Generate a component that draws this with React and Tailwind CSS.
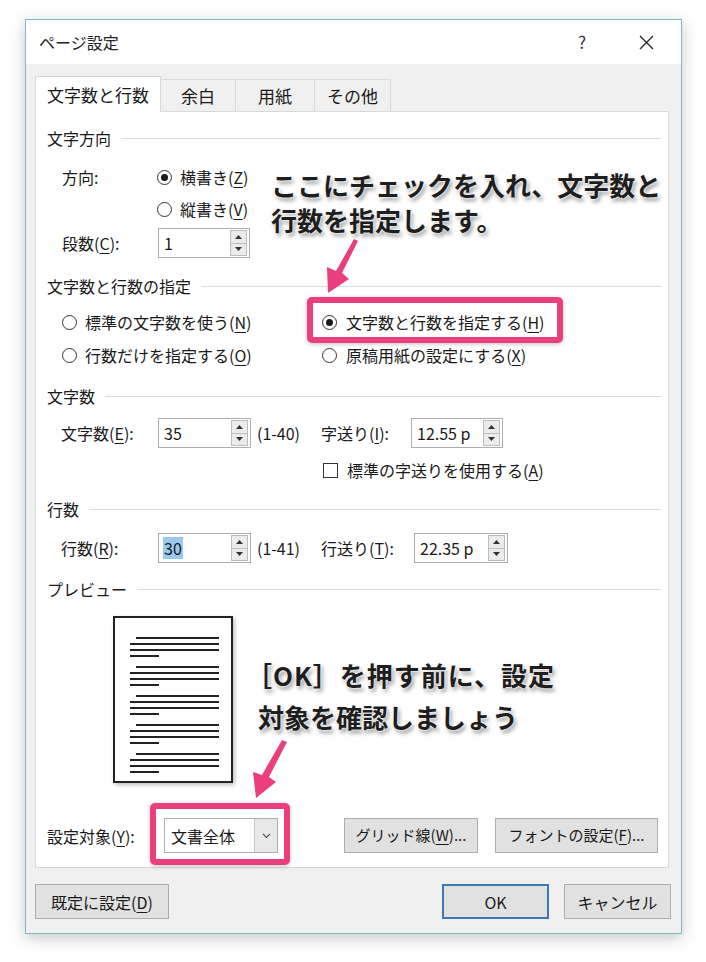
import React from 'react';

const font = "[font-family:'Noto_Sans_CJK_JP','Noto_Sans',sans-serif]";

const Key = ({ k }) => (
  <>
    (<span className="underline underline-offset-[3px] decoration-1">{k}</span>)
  </>
);

const Radio = ({ checked }) => (
  <span className="w-[15px] h-[15px] rounded-full border border-[#333] bg-white flex items-center justify-center shrink-0">
    {checked && <span className="w-[7px] h-[7px] rounded-full bg-[#1a1a1a]" />}
  </span>
);

const Section = ({ title }) => (
  <div className="flex items-center gap-[10px] h-[24px]">
    <span>{title}</span>
    <div className="flex-1 h-px bg-[#dcdcdc]" />
  </div>
);

const SpinArrows = () => (
  <div className="flex flex-col w-[17px] h-[26px] border border-[#bdbdbd] bg-[#ebebeb] shrink-0">
    <div className="flex-1 flex items-center justify-center border-b border-[#bdbdbd]">
      <svg width="7" height="4" viewBox="0 0 7 4"><path d="M0 4 L3.5 0 L7 4 Z" fill="#333" /></svg>
    </div>
    <div className="flex-1 flex items-center justify-center">
      <svg width="7" height="4" viewBox="0 0 7 4"><path d="M0 0 L3.5 4 L7 0 Z" fill="#333" /></svg>
    </div>
  </div>
);

const Spin = ({ value, className, selected }) => (
  <div className={`h-[30px] border border-[#abadb3] bg-white flex items-center justify-between pl-[4px] pr-[2px] ${className}`}>
    <span className={selected ? 'bg-[#99c9ef] px-[1px] leading-[22px]' : 'px-[1px]'}>{value}</span>
    <SpinArrows />
  </div>
);

const Button = ({ children, className }) => (
  <div className={`h-[35px] bg-[#e1e1e1] border border-[#adadad] flex items-center justify-center ${className}`}>
    {children}
  </div>
);

const PreviewPage = () => {
  const groups = [20, 49, 78, 107, 136];
  return (
    <div className="w-[120px] h-[167px] border-2 border-[#222] bg-white shadow-[2px_2px_4px_rgba(0,0,0,0.25)]">
      <svg width="116" height="163" viewBox="0 0 116 163">
        {groups.map((y) => (
          <g key={y} stroke="#222" strokeWidth="2">
            <line x1="21" y1={y} x2="104" y2={y} />
            <line x1="15" y1={y + 6} x2="104" y2={y + 6} />
            <line x1="15" y1={y + 12} x2="104" y2={y + 12} />
            <line x1="15" y1={y + 18} x2="44" y2={y + 18} />
          </g>
        ))}
      </svg>
    </div>
  );
};

const Callout = ({ children, className }) => (
  <div
    className={`absolute font-bold text-[26px] text-[#1e1e1e] whitespace-nowrap [text-shadow:0_0_2px_#fff,0_0_3px_#fff,2px_3px_4px_rgba(0,0,0,0.45)] ${className}`}
  >
    {children}
  </div>
);

const App = () => {
  return (
    <div className={`relative w-[706px] h-[962px] bg-white pt-[19px] pl-[25px] text-[16px] text-[#1a1a1a] ${font}`}>
      {/* dialog */}
      <div className="w-[657px] h-[915px] border border-[#7db8c5] bg-[#f0f0f0] shadow-[0_4px_14px_rgba(0,0,0,0.22)] flex flex-col">
        {/* title bar */}
        <div className="h-[44px] bg-white flex items-center pl-[13px] shrink-0">
          <span className="text-[16px] text-[#222]">ページ設定</span>
          <span className="ml-auto text-[17px] text-[#333] w-[14px] text-center">?</span>
          <svg className="ml-[50px] mr-[27px]" width="15" height="15" viewBox="0 0 15 15">
            <path d="M1 1 L14 14 M14 1 L1 14" stroke="#222" strokeWidth="1.3" />
          </svg>
        </div>

        <div className="flex-1 pt-[11px] pl-[9px] pr-[12px] flex flex-col">
          {/* tabs */}
          <div className="flex items-end h-[36px] text-[17px]">
            <div className="relative z-10 w-[126px] h-[36px] -mb-px bg-white border border-[#d9d9d9] border-b-0 flex items-center justify-center">
              文字数と行数
            </div>
            <div className="w-[75px] h-[32px] border-t border-r border-[#d9d9d9] flex items-center justify-center">余白</div>
            <div className="w-[79px] h-[32px] border-t border-r border-[#d9d9d9] flex items-center justify-center">用紙</div>
            <div className="w-[76px] h-[32px] border-t border-r border-[#d9d9d9] flex items-center justify-center">その他</div>
          </div>

          {/* panel */}
          <div className="w-[634px] h-[757px] bg-white border border-[#d9d9d9] pt-[14px] pl-[11px] pr-[7px] flex flex-col">
            <Section title="文字方向" />
            <div className="mt-[12px] h-[30px] flex items-center pl-[15px]">
              <span className="w-[95px]">方向:</span>
              <Radio checked />
              <span className="ml-[8px]">横書き<Key k="Z" /></span>
            </div>
            <div className="mt-[2px] h-[30px] flex items-center pl-[110px]">
              <Radio />
              <span className="ml-[8px]">縦書き<Key k="V" /></span>
            </div>
            <div className="mt-[4px] h-[30px] flex items-center pl-[15px]">
              <span className="w-[96px]">段数<Key k="C" />:</span>
              <Spin value="1" className="w-[92px]" />
            </div>

            <div className="mt-[16px]">
              <Section title="文字数と行数の指定" />
            </div>
            <div className="mt-[9px] h-[30px] flex items-center pl-[15px]">
              <div className="w-[260px] flex items-center">
                <Radio />
                <span className="ml-[8px]">標準の文字数を使う<Key k="N" /></span>
              </div>
              <Radio checked />
              <span className="ml-[9px]">文字数と行数を指定する<Key k="H" /></span>
            </div>
            <div className="mt-[3px] h-[30px] flex items-center pl-[15px]">
              <div className="w-[260px] flex items-center">
                <Radio />
                <span className="ml-[8px]">行数だけを指定する<Key k="O" /></span>
              </div>
              <Radio />
              <span className="ml-[9px]">原稿用紙の設定にする<Key k="X" /></span>
            </div>

            <div className="mt-[14px]">
              <Section title="文字数" />
            </div>
            <div className="mt-[10px] h-[30px] flex items-center pl-[14px]">
              <span className="w-[97px]">文字数<Key k="E" />:</span>
              <Spin value="35" className="w-[93px]" />
              <span className="ml-[6px] w-[64px]">(1-40)</span>
              <span className="w-[90px]">字送り<Key k="I" />:</span>
              <Spin value="12.55 p" className="w-[92px]" />
            </div>
            <div className="mt-[10px] h-[24px] flex items-center pl-[276px]">
              <span className="w-[15px] h-[15px] border border-[#333] bg-white" />
              <span className="ml-[9px]">標準の字送りを使用する<Key k="A" /></span>
            </div>

            <div className="mt-[15px]">
              <Section title="行数" />
            </div>
            <div className="mt-[12px] h-[30px] flex items-center pl-[14px]">
              <span className="w-[97px]">行数<Key k="R" />:</span>
              <Spin value="30" selected className="w-[93px]" />
              <span className="ml-[6px] w-[64px]">(1-41)</span>
              <span className="w-[93px]">行送り<Key k="T" />:</span>
              <Spin value="22.35 p" className="w-[94px]" />
            </div>

            <div className="mt-[14px]">
              <Section title="プレビュー" />
            </div>
            <div className="mt-[15px] pl-[66px]">
              <PreviewPage />
            </div>

            <div className="mt-[35px] h-[35px] flex items-center">
              <span className="w-[117px]">設定対象<Key k="Y" />:</span>
              <div className="w-[114px] h-[35px] border border-[#adadad] bg-white flex items-center">
                <span className="flex-1 pl-[6px]">文書全体</span>
                <div className="w-[23px] h-full bg-[#e8e8e8] border-l border-[#c8c8c8] flex items-center justify-center">
                  <svg width="9" height="6" viewBox="0 0 9 6"><path d="M1 1 L4.5 4.5 L8 1" stroke="#555" strokeWidth="1.1" fill="none" /></svg>
                </div>
              </div>
              <Button className="ml-[66px] w-[134px] text-[15px]">グリッド線<Key k="W" />...</Button>
              <Button className="ml-[17px] w-[163px] text-[15px]">フォントの設定<Key k="F" />...</Button>
            </div>
          </div>

          {/* footer buttons */}
          <div className="mt-[16px] flex items-center">
            <Button className="w-[134px]">既定に設定<Key k="D" /></Button>
            <div className="ml-auto flex items-center gap-[15px] mr-[-2px]">
              <div className="w-[107px] h-[35px] bg-[#e1e1e1] border-2 border-[#3c7ab5] flex items-center justify-center">OK</div>
              <Button className="w-[107px]">キャンセル</Button>
            </div>
          </div>
        </div>
      </div>

      {/* annotations */}
      <div className="absolute left-[307px] top-[297px] w-[256px] h-[46px] border-[6px] border-[#ea3f7c] rounded-[5px] shadow-[0_1px_4px_rgba(0,0,0,0.25)]" />
      <div className="absolute left-[150px] top-[803px] w-[140px] h-[62px] border-[6px] border-[#ea3f7c] rounded-[5px] shadow-[0_1px_4px_rgba(0,0,0,0.25)]" />

      <svg className="absolute left-0 top-0 pointer-events-none" width="706" height="962" viewBox="0 0 706 962">
        <polygon points="354,239 358,241 342,273 349,279 328,293 327,267 336,271" fill="#ea3f7c" />
        <polygon points="282,740 287,742 269,777 276,782 256,798 253,772 262,775" fill="#ea3f7c" />
      </svg>

      <Callout className="left-[271px] top-[167px] leading-[35px]">
        <div>ここにチェックを入れ、文字数と</div>
        <div>行数を指定します。</div>
      </Callout>
      <Callout className="left-[246px] top-[654px] leading-[42px]">
        <div className="tracking-[1px]">［OK］を押す前に、設定</div>
        <div className="pl-[12px]">対象を確認しましょう</div>
      </Callout>
    </div>
  );
};

export default App;
